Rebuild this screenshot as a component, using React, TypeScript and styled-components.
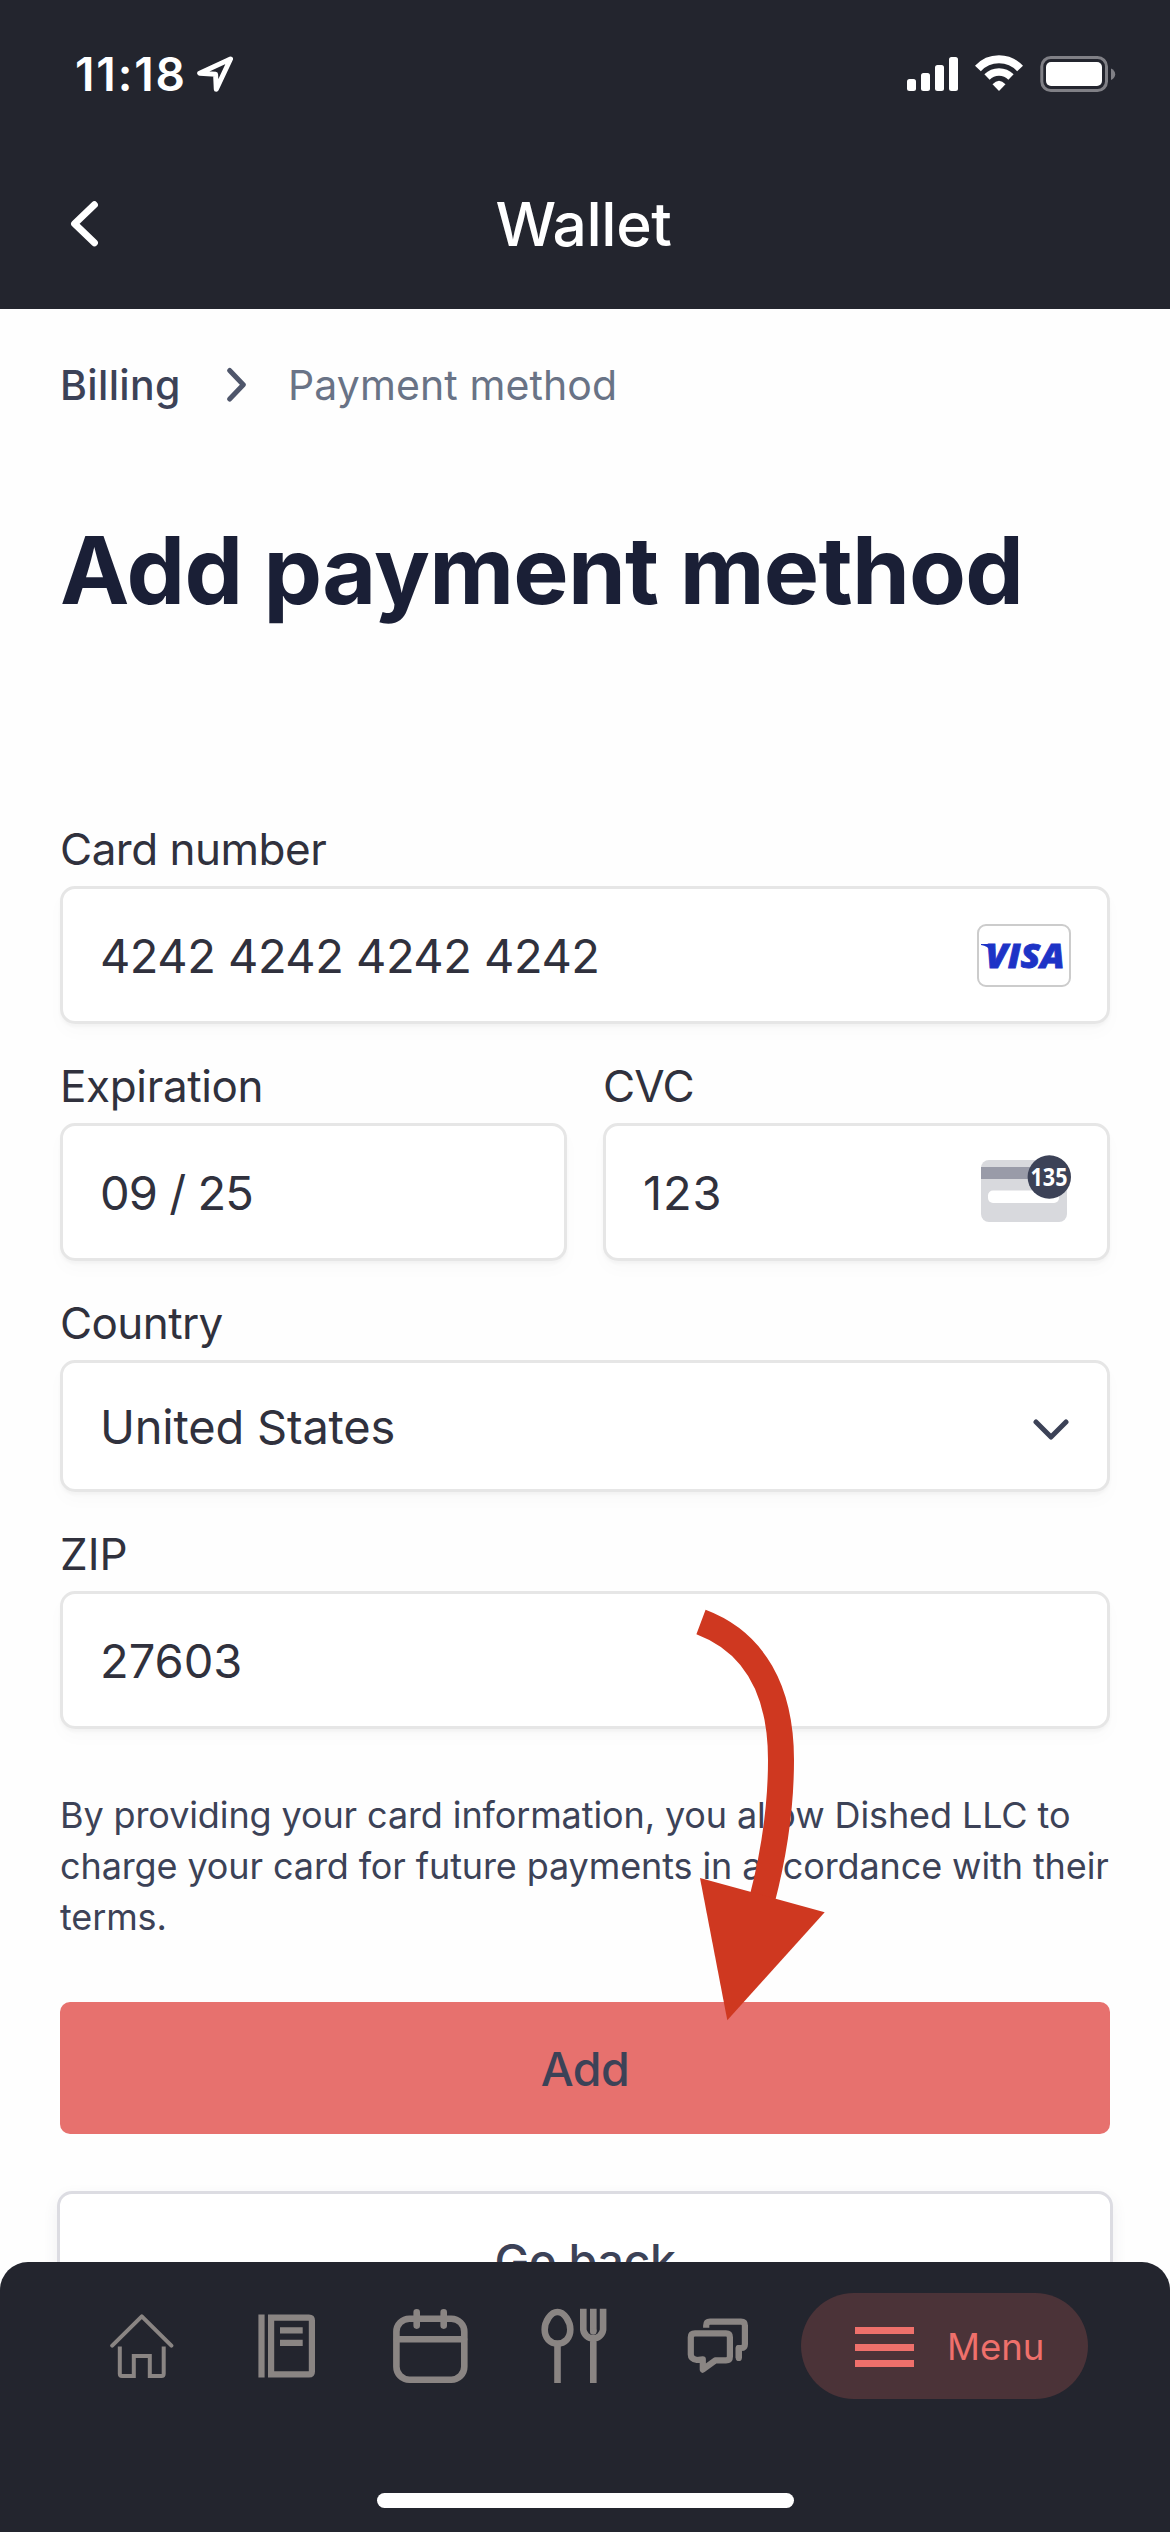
import React from 'react';
import styled, { createGlobalStyle } from 'styled-components';

const dark = '#23252e';
const ink = '#30313d';
const slate = '#3c4257';
const coral = '#ef706b';

const GlobalStyle = createGlobalStyle`
  * { box-sizing: border-box; }
  body { margin: 0; background: #fff; font-family: Inter, "Liberation Sans", sans-serif; }
  button { font-family: inherit; }
`;

const Screen = styled.div`
  position: relative;
  display: flex;
  flex-direction: column;
  width: 1170px;
  height: 2532px;
  overflow: hidden;
  background: #fefefe;
`;

const StatusBar = styled.div`
  display: flex;
  align-items: center;
  height: 148px;
  padding: 0 53px 0 75px;
  background: ${dark};
  color: #fff;
`;

const Time = styled.span`
  width: 122px;
  font-size: 46px;
  font-weight: 600;
  letter-spacing: 1.9px;
  white-space: nowrap;
`;

const StatusIcons = styled.div`
  display: flex;
  align-items: center;
  gap: 17px;
  margin-left: auto;
`;

const Header = styled.header`
  display: grid;
  grid-template-columns: 200px 1fr 200px;
  align-items: center;
  height: 161px;
  padding-bottom: 9px;
  background: ${dark};
  color: #fff;
`;

const BackButton = styled.button`
  display: flex;
  padding: 0 0 0 68px;
  border: 0;
  background: none;
`;

const HeaderTitle = styled.h2`
  margin: 0 3px 0 0;
  font-size: 60.5px;
  font-weight: 500;
  letter-spacing: -0.4px;
  line-height: 80px;
  text-align: center;
`;

const Content = styled.main`
  flex: 1;
  min-height: 0;
  padding: 0 60px;
  overflow: hidden;
`;

const Breadcrumb = styled.nav`
  display: flex;
  align-items: center;
  height: 152px;
  font-size: 41px;
`;

const CrumbLink = styled.span`
  width: 167px;
  color: ${slate};
  font-weight: 500;
  letter-spacing: 0.35px;
`;

const CrumbCurrent = styled.span`
  margin-left: 40px;
  color: #697386;
  letter-spacing: 0.1px;
`;

const Title = styled.h1`
  margin: 51px 0 195px;
  color: #1a1f36;
  font-size: 93px;
  font-weight: 700;
  letter-spacing: -0.76px;
  line-height: 116px;
  white-space: nowrap;
`;

const Form = styled.form`
  display: grid;
  grid-template-columns: 1fr 1fr;
  gap: 36px;
`;

const Field = styled.div<{ $wide?: boolean }>`
  display: flex;
  flex-direction: column;
  gap: 11px;
  grid-column: ${p => (p.$wide ? '1 / -1' : 'auto')};
`;

const Label = styled.label<{ $track?: number }>`
  color: ${ink};
  font-size: 44px;
  letter-spacing: ${p => p.$track ?? -0.5}px;
  line-height: 52px;
`;

const Box = styled.div<{ $height?: number }>`
  display: flex;
  align-items: center;
  justify-content: space-between;
  height: ${p => p.$height ?? 138}px;
  padding: 0 36px 0 37px;
  border: 3px solid #e6e6e6;
  border-radius: 15px;
  background: #fff;
  box-shadow: 0 3px 3px rgba(0, 0, 0, 0.03), 0 9px 18px rgba(0, 0, 0, 0.02);
`;

const Value = styled.span<{ $track?: number }>`
  color: ${ink};
  font-size: 47px;
  letter-spacing: ${p => p.$track ?? -0.5}px;
  white-space: pre;
`;

const SelectArrow = styled.svg`
  margin-top: 8px;
`;

const Terms = styled.p`
  margin: 61px -10px 59px 0;
  color: ${slate};
  font-size: 36px;
  letter-spacing: -0.11px;
  line-height: 51px;
`;

const AddButton = styled.button`
  display: block;
  width: 100%;
  height: 132px;
  padding: 2px 0 0;
  border: 0;
  border-radius: 10px;
  background: #e7716e;
  color: ${slate};
  font-size: 46.5px;
  font-weight: 500;
  letter-spacing: -0.6px;
`;

const GoBackButton = styled.button`
  display: block;
  width: 1056px;
  height: 140px;
  margin: 57px -3px 0;
  padding: 0;
  border: 3px solid #dcdce2;
  border-radius: 15px;
  background: #fff;
  box-shadow: 0 6px 15px rgba(60, 66, 87, 0.08);
  color: ${slate};
  font-size: 46.5px;
  font-weight: 500;
  letter-spacing: -0.35px;
`;

const TabBar = styled.footer`
  display: flex;
  flex-direction: column;
  align-items: center;
  height: 270px;
  padding-top: 31px;
  border-radius: 28px 28px 0 0;
  background: ${dark};
`;

const Tabs = styled.div`
  display: flex;
  align-items: center;
  width: 100%;
  height: 106px;
  padding-left: 70px;
`;

const Tab = styled.button`
  display: flex;
  justify-content: center;
  width: 144px;
  padding: 0;
  border: 0;
  background: none;
  color: #8a8583;
`;

const MenuButton = styled.button`
  display: flex;
  align-items: center;
  gap: 33px;
  width: 287px;
  height: 106px;
  margin-left: 11px;
  padding: 2px 0 0 54px;
  border: 0;
  border-radius: 53px;
  background: #4b3338;
  color: ${coral};
  font-size: 36.5px;
`;

const Bars = styled.span`
  display: flex;
  flex-direction: column;
  justify-content: space-between;
  width: 59px;
  height: 40px;

  i {
    height: 7px;
    background: ${coral};
  }
`;

const HomeIndicator = styled.div`
  width: 417px;
  height: 15px;
  margin-top: 94px;
  border-radius: 8px;
  background: #fff;
`;

const ArrowOverlay = styled.svg`
  position: absolute;
  left: 695px;
  top: 1605px;
  pointer-events: none;
`;

const LocationIcon = () => (
  <svg width="37" height="37" viewBox="197 57 37 37" fill="none" stroke="#fff" strokeWidth="5" strokeLinejoin="round">
    <path d="M230.5 60L199.7 74.2L215.6 75.3L216.3 90.3Z" />
  </svg>
);

const SignalIcon = () => (
  <svg width="51" height="36" viewBox="907 56 51 36" fill="#fff">
    <rect x="907" y="79" width="9" height="12" rx="2.5" />
    <rect x="921" y="73" width="9" height="18" rx="2.5" />
    <rect x="935" y="65" width="9" height="26" rx="2.5" />
    <rect x="949" y="57" width="9" height="34" rx="2.5" />
  </svg>
);

const WifiIcon = () => (
  <svg width="48" height="38" viewBox="975 55 48 38" fill="none" stroke="#fff">
    <path d="M977.9 68.5A28.7 28.7 0 0 1 1020.1 68.5" strokeWidth="8" />
    <path d="M987 77A17 17 0 0 1 1011 77" strokeWidth="7.5" />
    <path d="M999 91L992.5 84.3Q999 77 1005.5 84.3Z" fill="#fff" stroke="none" />
  </svg>
);

const BatteryIcon = () => (
  <svg width="77" height="36" viewBox="1040 56 77 36">
    <rect x="1041.8" y="57.5" width="64.7" height="33" rx="9" fill="none" stroke="#808086" strokeWidth="3" />
    <rect x="1046" y="62" width="56" height="24" rx="5" fill="#fff" />
    <path d="M1111 68.5Q1115.2 70.5 1115.2 74.2T1111 80Z" fill="#808086" />
  </svg>
);

const VisaIcon = () => (
  <svg width="94" height="63" viewBox="0 0 94 63">
    <rect x="1" y="1" width="92" height="61" rx="8" fill="#fff" stroke="#ccc" strokeWidth="2" />
    <path d="M4 20H14L13.5 27Q11 21.8 4 21Z" fill="#1d33c6" />
    <text x="8.5" y="44" fill="#1d33c6" stroke="#1d33c6" strokeWidth="0.8" fontFamily="Open Sans" fontSize="33.5" fontWeight="800" fontStyle="italic" textLength="79" lengthAdjust="spacingAndGlyphs">VISA</text>
  </svg>
);

const CvcIcon = () => (
  <svg width="90" height="74" viewBox="981 1155 90 74">
    <rect x="981" y="1160" width="86" height="62" rx="8" fill="#d8d9dd" />
    <rect x="981" y="1167" width="86" height="12" fill="#999ba8" />
    <rect x="988" y="1190.5" width="71" height="12.5" rx="5" fill="#fff" />
    <circle cx="1049.3" cy="1177" r="21.7" fill="#3c4257" />
    <text x="1030.5" y="1186.3" fill="#fff" fontFamily="Open Sans" fontSize="25.5" fontWeight="700" textLength="37" lengthAdjust="spacingAndGlyphs">135</text>
  </svg>
);

const HomeIcon = () => (
  <svg width="64" height="64" fill="none" stroke="currentColor" strokeWidth="4">
    <path d="M2.2 31.6L31.8 2.4L61.4 31.6" strokeLinecap="round" strokeLinejoin="round" />
    <path d="M9.8 32.5V59.8Q9.8 62 12 62H23.8V42H39.8V62H51.5Q53.7 62 53.7 59.8V32.5" />
  </svg>
);

const BookIcon = () => (
  <svg width="57" height="64" fill="none" stroke="currentColor" strokeWidth="6.2">
    <path d="M3.5 0.5V63.4M22 16.4H44.7M22 28.9H44.7" />
    <path d="M13.1 3.6H51Q53.9 3.6 53.9 6.5V57.4Q53.9 60.3 51 60.3H13.1Z" />
  </svg>
);

const CalendarIcon = () => (
  <svg width="75" height="76" fill="none" stroke="currentColor" strokeWidth="6.6" strokeLinecap="round">
    <rect x="3.4" y="10.7" width="67.9" height="61" rx="13" />
    <path d="M4 31.2H71" />
    <path d="M23.7 4.2V17.6M50.7 4.2V17.6" />
  </svg>
);

const UtensilsIcon = () => (
  <svg width="66" height="76" fill="none" stroke="currentColor" strokeWidth="6.6">
    <path d="M16.5 4C23.5 4 29.3 14 29.3 21.5C29.3 30 24 35.5 16.5 35.5S3.7 30 3.7 21.5C3.7 14 9.5 4 16.5 4Z" />
    <path d="M16.5 35.5V75" />
    <path d="M42.3 0.7V21.8A10 9.9 0 0 0 62.1 21.8V0.7M52.3 32V75M52.3 0.7V23.4" />
    <circle cx="52.3" cy="23.4" r="3.3" fill="currentColor" stroke="none" />
  </svg>
);

const ChatIcon = () => (
  <svg width="62" height="58" fill="none" stroke="currentColor" strokeWidth="6.2" strokeLinejoin="round">
    <path d="M19.2 10.8V8.5Q19.2 4.6 23 4.6H54Q57.9 4.6 57.9 8.5V27.3Q57.9 31 54.2 31H51.8V41" />
    <path d="M51.8 31V41" strokeLinecap="round" />
    <path d="M8 16.4H39Q42.9 16.4 42.9 20.3V39.5Q42.9 43.4 39 43.4H28.2L15.8 52.6V42.3Q15.8 42.3 10 43Q3.8 42 3.8 37.5V20.3Q3.8 16.4 8 16.4Z" />
  </svg>
);

export default function App() {
  return (
    <>
      <GlobalStyle />
      <Screen>
        <StatusBar>
          <Time>11:18</Time>
          <LocationIcon />
          <StatusIcons>
            <SignalIcon />
            <WifiIcon />
            <BatteryIcon />
          </StatusIcons>
        </StatusBar>
        <Header>
          <BackButton aria-label="Back">
            <svg width="33" height="52" viewBox="68 199 33 52" fill="none" stroke="#fff" strokeWidth="7" strokeLinecap="round" strokeLinejoin="round">
              <path d="M94.4 205.8L74.6 224.8L94.4 243.8" />
            </svg>
          </BackButton>
          <HeaderTitle>Wallet</HeaderTitle>
        </Header>
        <Content>
          <Breadcrumb>
            <CrumbLink>Billing</CrumbLink>
            <svg width="21" height="38" viewBox="227 367 21 38" fill="none" stroke="#4f566b" strokeWidth="5" strokeLinecap="round" strokeLinejoin="round">
              <path d="M229.7 371.5L243.3 385.8L229.7 400" />
            </svg>
            <CrumbCurrent>Payment method</CrumbCurrent>
          </Breadcrumb>
          <Title>Add payment method</Title>
          <Form>
            <Field $wide>
              <Label>Card number</Label>
              <Box>
                <Value>4242 4242 4242 4242</Value>
                <VisaIcon />
              </Box>
            </Field>
            <Field>
              <Label $track={-0.35}>Expiration</Label>
              <Box>
                <Value $track={-0.95}>09 / 25</Value>
              </Box>
            </Field>
            <Field>
              <Label $track={-0.8}>CVC</Label>
              <Box>
                <Value $track={0.8}>123</Value>
                <CvcIcon />
              </Box>
            </Field>
            <Field $wide>
              <Label $track={-0.6}>Country</Label>
              <Box $height={132}>
                <Value $track={-0.2}>United States</Value>
                <SelectArrow width="38" height="28" viewBox="1033 1416 38 28" fill="none" stroke={slate} strokeWidth="5" strokeLinecap="round" strokeLinejoin="round">
                  <path d="M1036 1422L1051 1437L1066 1422" />
                </SelectArrow>
              </Box>
            </Field>
            <Field $wide>
              <Label $track={0}>ZIP</Label>
              <Box>
                <Value $track={0}>27603</Value>
              </Box>
            </Field>
          </Form>
          <Terms>
            By providing your card information, you allow Dished LLC to
            charge your card for future payments in accordance with their
            terms.
          </Terms>
          <AddButton>Add</AddButton>
          <GoBackButton>Go back</GoBackButton>
        </Content>
        <TabBar>
          <Tabs>
            <Tab><HomeIcon /></Tab>
            <Tab><BookIcon /></Tab>
            <Tab><CalendarIcon /></Tab>
            <Tab><UtensilsIcon /></Tab>
            <Tab><ChatIcon /></Tab>
            <MenuButton>
              <Bars><i /><i /><i /></Bars>
              Menu
            </MenuButton>
          </Tabs>
          <HomeIndicator />
        </TabBar>
        <ArrowOverlay width="132" height="417" viewBox="695 1605 132 417">
          <path d="M701 1622C754 1642 781 1690 781 1760C781 1805 775 1850 762 1900" fill="none" stroke="#cf3820" strokeWidth="26" />
          <path d="M700 1878L824.7 1912.3L727.3 2020.3Z" fill="#cf3820" />
        </ArrowOverlay>
      </Screen>
    </>
  );
}
